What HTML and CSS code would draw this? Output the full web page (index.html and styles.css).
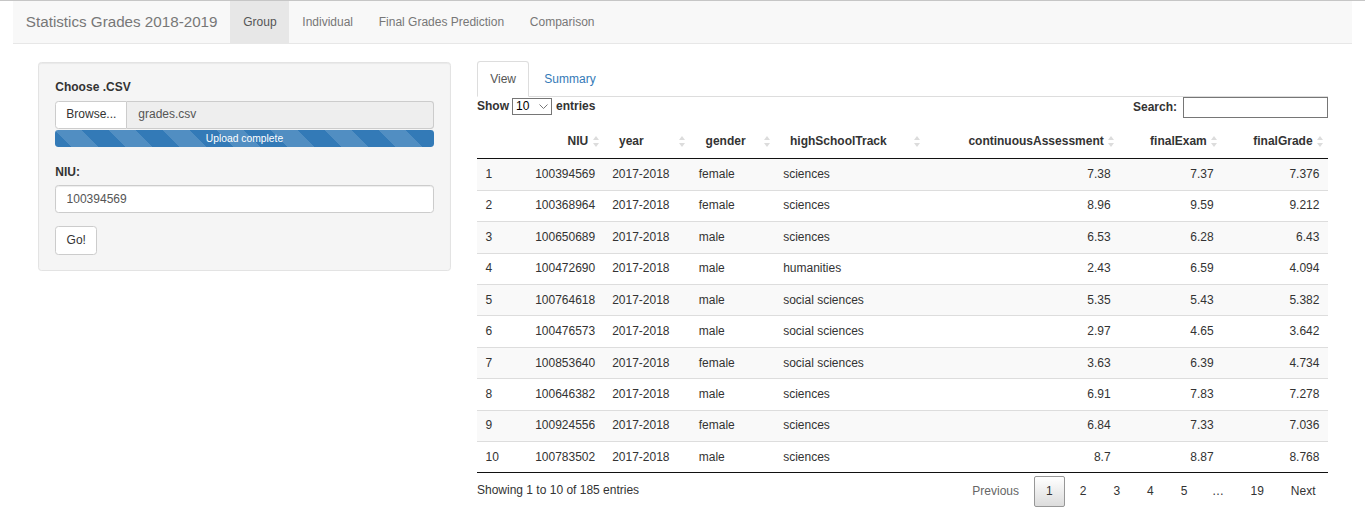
FILE: index.html
```html
<!DOCTYPE html>
<html lang="en">
<head>
<meta charset="utf-8">
<title>Statistics Grades 2018-2019</title>
<link rel="stylesheet" href="styles.css">
</head>
<body>
<nav class="navbar">
  <span class="brand">Statistics Grades 2018-2019</span>
  <ul class="nav">
    <li class="nav-item active">Group</li>
    <li class="nav-item">Individual</li>
    <li class="nav-item">Final Grades Prediction</li>
    <li class="nav-item">Comparison</li>
  </ul>
</nav>

<div class="page">
  <aside class="well">
    <div class="form-group">
      <label class="control-label">Choose .CSV</label>
      <div class="input-group">
        <span class="btn btn-file">Browse...</span>
        <span class="file-name">grades.csv</span>
      </div>
      <div class="progress"><div class="progress-bar">Upload complete</div></div>
    </div>
    <div class="form-group niu-group">
      <label class="control-label">NIU:</label>
      <input class="form-control" type="text" value="100394569">
    </div>
    <button class="btn btn-go">Go!</button>
  </aside>

  <main class="main">
    <ul class="tabs">
      <li class="tab active">View</li>
      <li class="tab">Summary</li>
    </ul>

    <div class="dt-toolbar">
      <label class="dt-length">Show
        <span class="select-wrap">
          <select class="dt-select"><option>10</option></select>
          <svg class="chev" width="9" height="5" viewBox="0 0 9 5"><path d="M0.5 0.5 L4.5 4.5 L8.5 0.5" fill="none" stroke="#777" stroke-width="1"/></svg>
        </span>
        entries</label>
      <label class="dt-search">Search: <input class="dt-search-input" type="search"></label>
    </div>

    <table class="dt">
      <colgroup>
        <col style="width:49.6px"><col style="width:77px"><col style="width:86.6px"><col style="width:84.4px">
        <col style="width:150px"><col style="width:194.6px"><col style="width:103px"><col style="width:105.8px">
      </colgroup>
      <thead>
        <tr>
          <th></th>
          <th class="r sort">NIU<span class="si"></span></th>
          <th class="sort">year<span class="si"></span></th>
          <th class="sort">gender<span class="si"></span></th>
          <th class="sort">highSchoolTrack<span class="si"></span></th>
          <th class="r sort">continuousAssessment<span class="si"></span></th>
          <th class="r sort">finalExam<span class="si"></span></th>
          <th class="r sort">finalGrade<span class="si"></span></th>
        </tr>
      </thead>
      <tbody>
        <tr><td>1</td><td class="r">100394569</td><td>2017-2018</td><td>female</td><td>sciences</td><td class="r">7.38</td><td class="r">7.37</td><td class="r">7.376</td></tr>
        <tr><td>2</td><td class="r">100368964</td><td>2017-2018</td><td>female</td><td>sciences</td><td class="r">8.96</td><td class="r">9.59</td><td class="r">9.212</td></tr>
        <tr><td>3</td><td class="r">100650689</td><td>2017-2018</td><td>male</td><td>sciences</td><td class="r">6.53</td><td class="r">6.28</td><td class="r">6.43</td></tr>
        <tr><td>4</td><td class="r">100472690</td><td>2017-2018</td><td>male</td><td>humanities</td><td class="r">2.43</td><td class="r">6.59</td><td class="r">4.094</td></tr>
        <tr><td>5</td><td class="r">100764618</td><td>2017-2018</td><td>male</td><td>social sciences</td><td class="r">5.35</td><td class="r">5.43</td><td class="r">5.382</td></tr>
        <tr><td>6</td><td class="r">100476573</td><td>2017-2018</td><td>male</td><td>social sciences</td><td class="r">2.97</td><td class="r">4.65</td><td class="r">3.642</td></tr>
        <tr><td>7</td><td class="r">100853640</td><td>2017-2018</td><td>female</td><td>social sciences</td><td class="r">3.63</td><td class="r">6.39</td><td class="r">4.734</td></tr>
        <tr><td>8</td><td class="r">100646382</td><td>2017-2018</td><td>male</td><td>sciences</td><td class="r">6.91</td><td class="r">7.83</td><td class="r">7.278</td></tr>
        <tr><td>9</td><td class="r">100924556</td><td>2017-2018</td><td>female</td><td>sciences</td><td class="r">6.84</td><td class="r">7.33</td><td class="r">7.036</td></tr>
        <tr><td>10</td><td class="r">100783502</td><td>2017-2018</td><td>male</td><td>sciences</td><td class="r">8.7</td><td class="r">8.87</td><td class="r">8.768</td></tr>
      </tbody>
    </table>

    <div class="dt-footer">
      <div class="dt-info">Showing 1 to 10 of 185 entries</div>
      <div class="dt-paginate">
        <span class="pg disabled">Previous</span>
        <span class="pg current">1</span>
        <span class="pg">2</span>
        <span class="pg">3</span>
        <span class="pg">4</span>
        <span class="pg">5</span>
        <span class="ellipsis">…</span>
        <span class="pg">19</span>
        <span class="pg">Next</span>
      </div>
    </div>
  </main>
</div>
</body>
</html>
```

FILE: styles.css
```css
* { box-sizing: border-box; }

html, body {
  margin: 0;
  padding: 0;
  background: #fff;
}

body {
  border-top: 1px solid #c6c6c6;
  font-family: "Liberation Sans", Arial, sans-serif;
  font-size: 12px;
  line-height: 17px;
  color: #333;
}

/* ---------- Navbar ---------- */
.navbar {
  margin: 0 13px;
  height: 43px;
  background: #f8f8f8;
  border-bottom: 1px solid #e7e7e7;
  display: flex;
  align-items: stretch;
}

.brand {
  padding: 0 12.86px;
  font-size: 15.2px;
  line-height: 42px;
  color: #777;
}

.nav {
  list-style: none;
  margin: 0;
  padding: 0;
  display: flex;
}

.nav-item {
  padding: 0 12.86px;
  line-height: 42px;
  color: #777;
}

.nav-item.active {
  background: #e7e7e7;
  color: #555;
}

/* ---------- Page layout ---------- */
.page {
  display: flex;
  align-items: flex-start;
  gap: 26px;
  padding: 17px 37px 0 38px;
}

/* ---------- Sidebar well ---------- */
.well {
  flex: 0 0 413px;
  margin-top: 1px;
  background: #f5f5f5;
  border: 1px solid #e3e3e3;
  border-radius: 3.4px;
  box-shadow: inset 0 1px 1px rgba(0,0,0,.05);
  padding: 16.3px 16.3px 15.3px;
}

.form-group { margin-bottom: 12.9px; }
.form-group:first-child { margin-bottom: 17px; }

.control-label {
  display: block;
  font-weight: bold;
  margin-bottom: 4.3px;
}

.input-group {
  display: flex;
  height: 28px;
}

.btn {
  display: inline-block;
  background: #fff;
  border: 1px solid #ccc;
  border-radius: 3.4px;
  color: #333;
  font-family: inherit;
  font-size: 12px;
  line-height: 17px;
  padding: 4.6px 10.3px;
}

.btn-file {
  border-radius: 3.4px 0 0 3.4px;
  padding: 4.5px 10px;
}

.file-name {
  flex: 1;
  background: #eee;
  border: 1px solid #ccc;
  border-left: none;
  border-radius: 0 3.4px 3.4px 0;
  color: #555;
  padding: 4.5px 11px;
}

.progress {
  margin-top: 1px;
  height: 17px;
  border-radius: 3.4px;
  overflow: hidden;
  background: #f5f5f5;
}

.progress-bar {
  height: 100%;
  width: 100%;
  background-color: #337ab7;
  background-image: linear-gradient(45deg,
    rgba(255,255,255,.15) 25%, transparent 25%,
    transparent 50%, rgba(255,255,255,.15) 50%,
    rgba(255,255,255,.15) 75%, transparent 75%, transparent);
  background-size: 54px 54px;
  color: #fff;
  font-size: 10.3px;
  line-height: 17px;
  text-align: center;
}

.form-control {
  display: block;
  width: 100%;
  height: 28px;
  border: 1px solid #ccc;
  border-radius: 3.4px;
  background: #fff;
  box-shadow: inset 0 1px 1px rgba(0,0,0,.075);
  padding: 4px 10.3px;
  font-family: inherit;
  font-size: 12px;
  color: #555;
}

.btn-go {
  height: 29px;
  padding: 0 10.3px;
}

/* ---------- Main panel ---------- */
.main {
  flex: 1;
  min-width: 0;
}

.tabs {
  list-style: none;
  margin: 0;
  padding: 0;
  display: flex;
  border-bottom: 1px solid #ddd;
}

.tab {
  margin-bottom: -1px;
  margin-right: 2px;
  padding: 8.57px 12.2px;
  border: 1px solid transparent;
  border-radius: 3.4px 3.4px 0 0;
  line-height: 17.14px;
  color: #337ab7;
}

.tab.active {
  background: #fff;
  border-color: #ddd;
  border-bottom-color: transparent;
  color: #555;
}

.dt-toolbar {
  height: 27px;
  display: flex;
  justify-content: space-between;
  align-items: flex-start;
}

.dt-length, .dt-search {
  font-weight: bold;
  display: flex;
  align-items: center;
}

.dt-length { height: 17px; margin-top: 0.5px; }

.select-wrap {
  position: relative;
  display: inline-block;
  margin: 0 4px 0 3px;
}

.dt-select {
  -webkit-appearance: none;
  appearance: none;
  width: 40px;
  height: 17px;
  border: 1px solid #767676;
  border-radius: 0;
  background: #fff;
  padding: 0 0 0 3px;
  font-family: inherit;
  font-size: 12px;
  line-height: 15px;
  color: #000;
  display: block;
}

.chev {
  position: absolute;
  right: 4px;
  top: 6px;
  pointer-events: none;
}

.dt-search { height: 21px; }

.dt-search-input {
  width: 145px;
  height: 21px;
  margin-left: 6px;
  border: 1px solid #767676;
  padding: 1px 2px;
  font-family: inherit;
  font-size: 12px;
}

/* ---------- Table ---------- */
.dt {
  width: 100%;
  table-layout: fixed;
  border-collapse: separate;
  border-spacing: 0;
  border-bottom: 1px solid #111;
}

.dt th {
  position: relative;
  padding: 8.57px 15.43px;
  line-height: 17px;
  font-weight: bold;
  text-align: left;
  border-bottom: 1px solid #111;
  white-space: nowrap;
}

.dt th.r, .dt td.r { text-align: right; }

.si {
  position: absolute;
  right: 5px;
  top: 50%;
  margin-top: -6px;
  width: 6px;
  height: 12px;
}

.si::before, .si::after {
  content: "";
  position: absolute;
  left: 0;
  border-left: 3px solid transparent;
  border-right: 3px solid transparent;
}

.si::before {
  top: 0.5px;
  border-bottom: 4.5px solid #dcdcdc;
}

.si::after {
  bottom: 0.5px;
  border-top: 4.5px solid #dcdcdc;
}

.dt td {
  padding: 6.7px 8.57px;
  line-height: 17.03px;
  border-top: 1px solid #ddd;
  white-space: nowrap;
}

.dt tbody tr:first-child td { border-top: none; }

.dt tbody tr:nth-child(odd) { background: #f9f9f9; }

/* ---------- Footer ---------- */
.dt-footer {
  display: flex;
  justify-content: space-between;
  align-items: flex-start;
}

.dt-info {
  padding-top: 9px;
}

.dt-paginate {
  display: flex;
  padding-top: 2.5px;
}

.pg {
  margin-left: 2px;
  padding: 6px 11.5px;
  border: 1px solid transparent;
  border-radius: 2px;
  text-align: center;
  color: #333;
}

.pg.disabled { color: #666; }

.pg.current {
  border-color: #979797;
  background: linear-gradient(to bottom, #fff 0%, #dcdcdc 100%);
}

.ellipsis {
  padding: 7px 12px;
  color: #333;
}
```
